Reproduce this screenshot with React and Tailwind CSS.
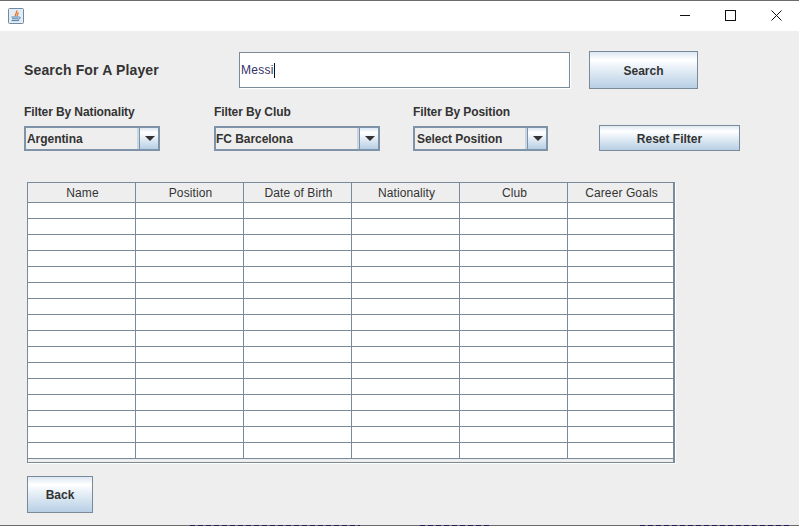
const columns = ['Name', 'Position', 'Date of Birth', 'Nationality', 'Club', 'Career Goals']
const rows = Array.from({ length: 16 }, (_, i) => i)

const metalGradient = 'bg-[linear-gradient(to_bottom,#dde8f3_0%,#ffffff_22%,#e8f0f7_45%,#b8cfe5_100%)]'

function JavaIcon() {
  return (
    <svg width="16" height="16" viewBox="0 0 16 16">
      <rect x="0.5" y="0.5" width="15" height="15" rx="1" fill="#e4edf5" stroke="#6f8ba3" />
      <path d="M8.5 2.5 C10 4.5 6.5 5.5 7.5 8 M10 4.5 C10.5 6 8.8 6.5 9.3 8" fill="none" stroke="#e8762a" strokeWidth="1.4" />
      <path d="M3.5 9 H10.5 M4 10.8 H10 M3.5 12.6 H11 M10.5 9 C13 8.6 13 11 10 11.2" fill="none" stroke="#4f7fa6" strokeWidth="1" />
    </svg>
  )
}

function ComboBox({ label, width, labelClass }) {
  return (
    <div className={`flex h-[25px] border-2 border-[#7f93a8] bg-[#eeeeee] ${width}`}>
      <div className={`flex-1 border-r-2 border-[#c9d6e2] text-[12px] font-bold leading-[22px] tracking-[-0.05px] text-[#333333] ${labelClass}`}>
        {label}
      </div>
      <div className={`flex w-[19px] items-center justify-center border-l border-[#7f93a8] pl-[1px] ${metalGradient}`}>
        <svg width="10" height="5" viewBox="0 0 10 5">
          <path d="M0 0 H10 L5 5 Z" fill="#333333" />
        </svg>
      </div>
    </div>
  )
}

function MetalButton({ children, className }) {
  return (
    <button className={`border border-[#7a8a99] text-[12px] font-bold text-[#333333] ${metalGradient} ${className}`}>
      {children}
    </button>
  )
}

export default function App() {
  return (
    <div className="relative h-[526px] w-[799px] overflow-hidden bg-[#eeeeee] font-['Liberation_Sans',Arial,sans-serif]">
      {/* title bar */}
      <div className="flex h-[31px] items-center justify-between border-t border-[#6b6b6b] bg-white">
        <div className="ml-[8px] mt-[-1px]">
          <JavaIcon />
        </div>
        <div className="mt-[-1px] flex items-center">
          <svg className="mr-[35px]" width="11" height="11" viewBox="0 0 11 11">
            <path d="M1 5.5 H11" stroke="#111111" strokeWidth="1" />
          </svg>
          <svg className="mr-[35px]" width="11" height="11" viewBox="0 0 11 11">
            <rect x="0.5" y="0.5" width="10" height="10" fill="none" stroke="#111111" />
          </svg>
          <svg className="mr-[17px]" width="11" height="11" viewBox="0 0 11 11">
            <path d="M0.5 0.5 L10.5 10.5 M10.5 0.5 L0.5 10.5" stroke="#111111" strokeWidth="1" />
          </svg>
        </div>
      </div>

      {/* search row */}
      <div className="mt-[20px] flex h-[38px] items-center pl-[24px]">
        <div className="w-[215px] pt-[1px] text-[14px] font-bold tracking-[0.15px] text-[#333333]">Search For A Player</div>
        <div className="flex h-[36px] w-[331px] items-center border border-[#7a8a99] bg-white pl-[1px] text-[12px] tracking-[0.3px] text-[#333366] shadow-[1px_1px_0_#ffffff]">
          Messi
          <span className="ml-[0.5px] h-[15px] w-[1px] bg-[#111111]" />
        </div>
        <MetalButton className="ml-[19px] h-[38px] w-[109px] pt-[2px]">Search</MetalButton>
      </div>

      {/* filter labels */}
      <div className="mt-[16px] flex h-[14px] items-center pl-[24px] text-[12px] font-bold leading-[14px] tracking-[-0.1px] text-[#333333]">
        <div className="w-[190px]">Filter By Nationality</div>
        <div className="w-[199px]">Filter By Club</div>
        <div>Filter By Position</div>
      </div>

      {/* filter row */}
      <div className="mt-[6px] flex h-[26px] items-end pl-[24px]">
        <ComboBox label="Argentina" width="w-[136px]" labelClass="pl-[1px]" />
        <div className="w-[54px]" />
        <ComboBox label="FC Barcelona" width="w-[166px]" labelClass="pl-0" />
        <div className="w-[33px]" />
        <ComboBox label="Select Position" width="w-[135px]" labelClass="pl-[2px]" />
        <MetalButton className="ml-[51px] h-[26px] w-[141px] pt-[2px]">Reset Filter</MetalButton>
      </div>

      {/* players table */}
      <div className="ml-[27px] mt-[31px] h-[281px] w-[648px] border border-r-2 border-[#7a8a99] bg-[#eeeeee] shadow-[1px_1px_0_#ffffff]">
        <div className="flex h-[20px] border-b border-[#7a8a99]">
          {columns.map((name) => (
            <div key={name} className="w-[108px] shrink-0 border-r border-[#7a8a99] pl-[2px] pt-[2px] text-center text-[12px] leading-[17px] tracking-[0.1px] text-[#333333] last:w-auto last:flex-1 last:border-r-0">
              {name}
            </div>
          ))}
        </div>
        {rows.map((row) => (
          <div key={row} className="flex h-[16px] border-b border-[#7a8a99] bg-white">
            {columns.map((name) => (
              <div key={name} className="w-[108px] shrink-0 border-r border-[#7a8a99] last:w-auto last:flex-1 last:border-r-0" />
            ))}
          </div>
        ))}
      </div>

      <MetalButton className="ml-[27px] mt-[13px] block h-[37px] w-[66px]">Back</MetalButton>

      {/* edge of the window behind, only its last pixel row shows */}
      <div className="absolute bottom-0 left-0 h-[1px] w-full bg-[#6b6b6b]" />
      <svg className="absolute bottom-0 left-0" width="799" height="1" viewBox="0 0 799 1">
        <path d="M190 0.5 H360 M420 0.5 H490 M640 0.5 H790" stroke="#1c1c5c" strokeWidth="1" strokeDasharray="5 3" />
      </svg>
    </div>
  )
}
